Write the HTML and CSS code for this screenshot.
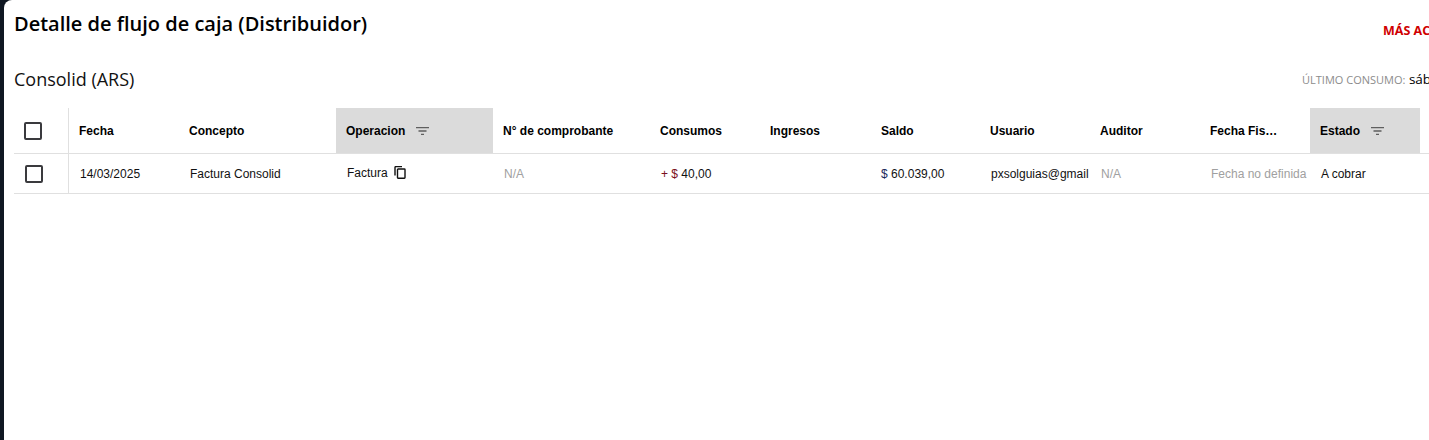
FILE: index.html
```html
<!DOCTYPE html>
<html lang="es">
<head>
    <meta charset="UTF-8">
    <title>Detalle de flujo de caja</title>
    <link rel="stylesheet" href="styles.css">
</head>
<body>
    <main class="panel">
        <div class="top">
            <h1>Detalle de flujo de caja (Distribuidor)</h1>
            <span class="more">MÁS AC</span>
        </div>
        <div class="sub">
            <h2>Consolid (ARS)</h2>
            <div class="last"><span class="last-label">ÚLTIMO CONSUMO:</span> <span class="last-value">sáb</span></div>
        </div>
        <table class="grid">
            <colgroup>
                <col class="c-check">
                <col class="c-sm">
                <col class="c-lg">
                <col class="c-lg">
                <col class="c-lg">
                <col class="c-sm">
                <col class="c-sm">
                <col class="c-sm">
                <col class="c-sm">
                <col class="c-sm">
                <col class="c-sm">
                <col class="c-sm">
                <col class="c-rest">
            </colgroup>
            <thead>
                <tr>
                    <th class="check"><span class="box"></span></th>
                    <th>Fecha</th>
                    <th>Concepto</th>
                    <th class="active">
                        <div class="head-filter">
                            Operacion
                            <svg class="filter" viewBox="0 0 13 8"><path d="M0 .6h13M2.5 4h8M5 7.4h3" /></svg>
                        </div>
                    </th>
                    <th>N° de comprobante</th>
                    <th>Consumos</th>
                    <th>Ingresos</th>
                    <th class="saldo">Saldo</th>
                    <th>Usuario</th>
                    <th>Auditor</th>
                    <th>Fecha Fis…</th>
                    <th class="active">
                        <div class="head-filter">
                            Estado
                            <svg class="filter" viewBox="0 0 13 8"><path d="M0 .6h13M2.5 4h8M5 7.4h3" /></svg>
                        </div>
                    </th>
                    <th></th>
                </tr>
            </thead>
            <tbody>
                <tr>
                    <td class="check"><span class="box"></span></td>
                    <td>14/03/2025</td>
                    <td>Factura Consolid</td>
                    <td>
                        <div class="op">
                            Factura
                            <svg class="copy" viewBox="0 0 12 13"><path d="M1 9.5V1.5a1 1 0 0 1 1-1h6" /><rect x="3.5" y="3" width="7.5" height="9.2" rx=".6" /></svg>
                        </div>
                    </td>
                    <td class="muted">N/A</td>
                    <td><span class="minus">+ $</span> 40,00</td>
                    <td></td>
                    <td><span class="cur">$</span> 60.039,00</td>
                    <td><div class="clip">pxsolguias@gmail</div></td>
                    <td class="muted">N/A</td>
                    <td class="muted">Fecha no definida</td>
                    <td>A cobrar</td>
                    <td></td>
                </tr>
            </tbody>
        </table>
    </main>
</body>
</html>
```

FILE: styles.css
```css
html, body {
    height: 100%;
}
body {
    margin: 0;
    background-color: #0f1722;
    overflow: hidden;
}
.panel {
    height: 100%;
    margin-left: 4px;
    padding: 0 0 0 10px;
    background-color: #fff;
    border-top-left-radius: 8px;
    overflow: hidden;
}
.top {
    display: flex;
    justify-content: space-between;
    height: 62px;
}
h1 {
    margin: 10px 0 0;
    font: 600 20px/27px "Open Sans", sans-serif;
    color: #000;
}
.more {
    margin: 22px 0 0;
    width: 46px;
    flex: none;
    white-space: nowrap;
    font: 700 12.5px/17px "Open Sans", sans-serif;
    color: #d00000;
}
.sub {
    display: flex;
    justify-content: space-between;
    align-items: center;
    height: 34px;
}
h2 {
    margin: 0;
    font: 400 18px/24px "Open Sans", sans-serif;
    color: #111;
}
.last {
    width: 127px;
    flex: none;
    white-space: nowrap;
    font: 400 13.5px/16px "Open Sans", sans-serif;
    color: #000;
}
.last-label {
    font-size: 11px;
    color: #8c8c8c;
}
.grid {
    margin-top: 12px;
    width: 1415px;
    table-layout: fixed;
    border-collapse: separate;
    border-spacing: 0;
    font-family: "Liberation Sans", Arial, sans-serif;
    font-size: 12px;
    color: #111;
}
.c-check { width: 55px; }
.c-sm { width: 110px; }
.c-lg { width: 157px; }
.c-rest { width: 9px; }
th {
    height: 45px;
    padding: 0 10px;
    text-align: left;
    font-weight: 700;
    color: #000;
    border-bottom: 1px solid #e0e0e0;
    white-space: nowrap;
}
td {
    height: 39px;
    padding: 0 1px 0 11px;
    border-bottom: 1px solid #e0e0e0;
    white-space: nowrap;
}
th.check, td.check {
    padding: 0 0 0 10px;
    border-right: 1px solid #e0e0e0;
}
td.check {
    padding-left: 11px;
}
th.saldo {
    padding-left: 11px;
}
.box {
    display: block;
    width: 14px;
    height: 14px;
    border: 2px solid #3a3a3e;
    border-radius: 2px;
}
.active {
    background-color: #dbdbdb;
}
.head-filter, .op {
    display: flex;
    align-items: center;
}
.filter {
    width: 13px;
    height: 8px;
    margin-left: 11px;
    fill: none;
    stroke: #5f5f5f;
    stroke-width: 1.3;
}
.op {
    margin-top: -2px;
}
.copy {
    width: 12px;
    height: 13px;
    margin-left: 6px;
    fill: none;
    stroke: #111;
    stroke-width: 1.4;
}
.muted {
    color: #a0a0a0;
}
.minus {
    color: #7a1020;
}
.cur {
    color: #1c2a5a;
}
.clip {
    overflow: hidden;
}
```
